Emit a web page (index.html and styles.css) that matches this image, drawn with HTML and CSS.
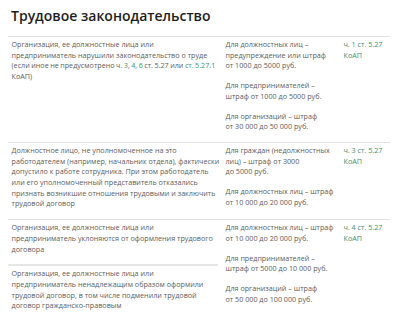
FILE: index.html
```html
<!DOCTYPE html>
<html lang="ru">
<head>
<meta charset="utf-8">
<link rel="stylesheet" href="styles.css">
</head>
<body>
<div class="page">
  <h1 class="title">Трудовое законодательство</h1>
  <div class="table">
    <div class="row">
      <div class="cell c1"><p>Организация, ее должностные лица или предприниматель&nbsp;нарушили законодательство о труде <span class="fit">(если&nbsp;иное не предусмотрено ч. <a>3</a>, <a>4</a>, <a>6</a> ст. 5.27 или <a>ст.&nbsp;5.27.1</a></span> КоАП)</p></div>
      <div class="cell c2">
        <p>Для должностных лиц – предупреждение или штраф от&nbsp;1000 до&nbsp;5000&nbsp;руб.</p>
        <p>Для предпринимателей – штраф&nbsp;от&nbsp;1000 до&nbsp;5000&nbsp;руб.</p>
        <p>Для организаций – штраф от&nbsp;30&nbsp;000 до&nbsp;50&nbsp;000&nbsp;руб.</p>
      </div>
      <div class="cell c3"><p><a>ч. 1 ст. 5.27 КоАП</a></p></div>
    </div>
    <div class="row">
      <div class="cell c1"><p>Должностное лицо, не уполномоченное на это работодателем&nbsp;(например, начальник отдела), фактически допустило к работе сотрудника. При этом работодатель или&nbsp;его уполномоченный представитель отказались признать&nbsp;возникшие отношения трудовыми и заключить трудовой&nbsp;договор</p></div>
      <div class="cell c2">
        <p>Для граждан (недолжностных лиц) – штраф от&nbsp;3000 до&nbsp;5000&nbsp;руб.</p>
        <p>Для должностных лиц – штраф от&nbsp;10&nbsp;000 до&nbsp;20&nbsp;000&nbsp;руб.</p>
      </div>
      <div class="cell c3"><p><a>ч. 3 ст. 5.27 КоАП</a></p></div>
    </div>
    <div class="row">
      <div class="stack">
        <div class="cell c1"><p>Организация, ее должностные лица или предприниматель&nbsp;уклоняются от оформления трудового договора</p></div>
        <div class="cell c1 sub"><p>Организация, ее должностные лица или предприниматель&nbsp;ненадлежащим образом оформили трудовой договор, в том числе подменили трудовой договор гражданско-правовым</p></div>
      </div>
      <div class="cell c2">
        <p>Для должностных лиц – штраф от&nbsp;10&nbsp;000 до&nbsp;20&nbsp;000&nbsp;руб.</p>
        <p>Для предпринимателей – штраф&nbsp;от&nbsp;5000 до&nbsp;10&nbsp;000&nbsp;руб.</p>
        <p>Для организаций – штраф от&nbsp;50&nbsp;000 до&nbsp;100&nbsp;000&nbsp;руб.</p>
      </div>
      <div class="cell c3"><p><a>ч. 4 ст. 5.27 КоАП</a></p></div>
    </div>
  </div>
</div>
</body>
</html>
```

FILE: styles.css
```css
html, body {
  margin: 0;
  padding: 0;
  background: #ffffff;
}

.page {
  padding: 0 10px 0 8px;
  font-family: "Open Sans", "Liberation Sans", sans-serif;
  color: #5e5e5e;
}

.title {
  margin: 7px 0 11px 3px;
  font-size: 14px;
  line-height: 18px;
  font-weight: 600;
  color: #1e1e1e;
}

.table {
  display: flex;
  flex-direction: column;
}

.row {
  display: grid;
  grid-template-columns: 216px 118px 48px;
  border-top: 1px solid #e2e2e2;
}

.cell {
  padding: 2px 0 10px 1.5px;
  font-size: 7.2px;
  line-height: 10.7px;
}

.cell p {
  margin: 0 0 9px 0;
}

.cell p:last-child {
  margin-bottom: 0;
}

.c1 {
  padding-left: 3.5px;
}

.c2 {
  padding-right: 0.5px;
}

.fit {
  word-spacing: -0.4px;
}

.stack {
  display: flex;
  flex-direction: column;
}

.sub {
  border-top: 2px solid #e6e6e6;
  margin-right: 6px;
  padding-right: 2px;
}

a {
  color: #3e8e6e;
  text-decoration: none;
}
```
